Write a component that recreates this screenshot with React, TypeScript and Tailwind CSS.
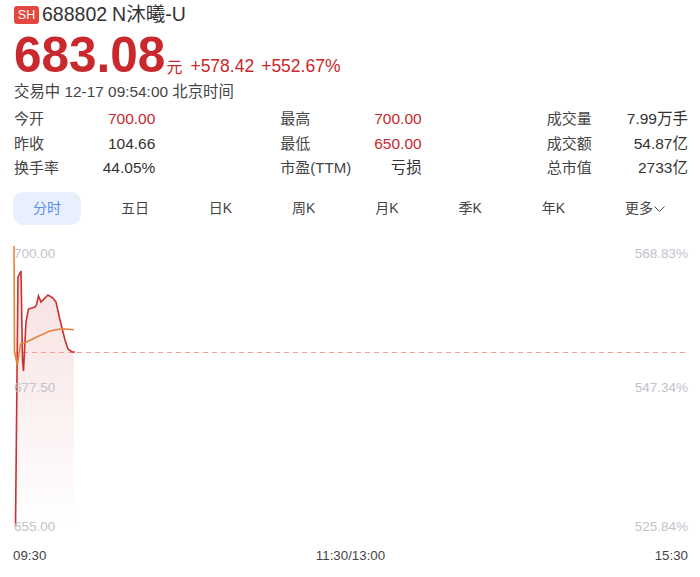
const font = "font-['Liberation_Sans','Noto_Sans_CJK_SC',sans-serif]";

const stats = [
  [
    { label: "今开", value: "700.00", red: true },
    { label: "最高", value: "700.00", red: true },
    { label: "成交量", value: "7.99万手" },
  ],
  [
    { label: "昨收", value: "104.66" },
    { label: "最低", value: "650.00", red: true },
    { label: "成交额", value: "54.87亿" },
  ],
  [
    { label: "换手率", value: "44.05%" },
    { label: "市盈(TTM)", value: "亏损" },
    { label: "总市值", value: "2733亿" },
  ],
];

const tabs = ["五日", "日K", "周K", "月K", "季K", "年K"];

function IntradayChart() {
  return (
    <svg viewBox="0 0 700 300" className="w-[700px] h-[300px] block">
      <defs>
        <linearGradient id="fill" x1="0" y1="0" x2="0" y2="1">
          <stop offset="0" stopColor="#f7e0e0" />
          <stop offset="1" stopColor="#ffffff" />
        </linearGradient>
      </defs>
      {/* area under the price line */}
      <path
        d="M15.5 282 L18 32 L21 26 L22.5 115 L23.5 126 L26 77 L28.5 64 L35 62 L36.5 60 L38.5 51 L41 57 L48 50 L53 53 L56 57 L60 75 L65 95 L68 104 L72 107 L74 107 L74 282 Z"
        fill="url(#fill)"
      />
      <line x1="14" y1="107.5" x2="688" y2="107.5" stroke="#f39a9a" strokeWidth="1" strokeDasharray="5 4" />
      {/* price */}
      <path
        d="M15.5 282 L18 32 L21 26 L22.5 115 L23.5 126 L26 77 L28.5 64 L35 62 L36.5 60 L38.5 51 L41 57 L48 50 L53 53 L56 57 L60 75 L65 95 L68 104 L72 107 L75 107"
        fill="none"
        stroke="#cb2f30"
        strokeWidth="1.6"
      />
      {/* average price */}
      <path
        d="M14 1 L14.5 107 L17.3 120 L20.6 99 L26.7 97 L36.7 92 L50 86 L61.7 83.7 L74 84.7"
        fill="none"
        stroke="#e8833a"
        strokeWidth="1.6"
      />
    </svg>
  );
}

export default function App() {
  return (
    <div className={`${font} w-[700px] h-[577px] bg-white text-[#333] overflow-hidden`}>
      {/* Header */}
      <div className="pl-[14px] pr-3 pt-[5px]">
        <div className="flex items-center h-5">
          <span className="w-[25px] h-[18px] rounded-[3px] bg-[#e2483f] text-white text-[12.5px] flex items-center justify-center">
            SH
          </span>
          <span className="ml-[3px] text-[19.5px] text-[#333]">688802</span>
          <span className="ml-[5px] text-[19.5px] text-[#333]">N沐曦-U</span>
        </div>
        <div className="flex items-end mt-[3px] h-[53px] text-[#c9282d]">
          <span className="text-[49.5px] font-bold leading-[53px]">683.08</span>
          <span className="text-[16px] leading-none ml-[1px] mb-[5px]">元</span>
          <span className="text-[17.5px] leading-none ml-[8px] mb-[6px]">+578.42</span>
          <span className="text-[17.5px] leading-none ml-[7px] mb-[6px]">+552.67%</span>
        </div>
        <div className="text-[15.4px] leading-5 mt-[1px] text-[#444]">交易中 12-17 09:54:00 北京时间</div>
      </div>

      {/* Stats */}
      <div className="pl-[14px] pr-3 mt-[7px] flex flex-col gap-y-[4.5px]">
        {stats.map((row) => (
          <div key={row[0].label} className="grid grid-cols-3 gap-x-[125px] text-[15px] leading-5">
            {row.map((s) => (
              <div key={s.label} className="flex justify-between">
                <span className="text-[#444]">{s.label}</span>
                <span className={`text-[15.5px] ${s.red ? "text-[#c9282d]" : "text-[#333]"}`}>{s.value}</span>
              </div>
            ))}
          </div>
        ))}
      </div>

      {/* Tabs */}
      <div className="pl-[13px] pr-3 mt-[14px] flex items-center justify-between text-[14px] text-[#444]">
        <div className="w-[68px] h-[33px] rounded-[10px] bg-[#e8f0fe] text-[#5b8def] flex items-center justify-center">
          分时
        </div>
        {tabs.map((t) => (
          <div key={t} className="px-5">
            {t}
          </div>
        ))}
        <div className="flex items-center pl-5 pr-[22px]">
          更多
          <svg width="13" height="12" viewBox="0 0 13 12" fill="none" stroke="#444" strokeWidth="1">
            <path d="M1.5 3.5 L6.5 8.5 L11.5 3.5" />
          </svg>
        </div>
      </div>

      {/* Chart */}
      <div className="relative mt-[20px]">
        <IntradayChart />
        <div className="absolute inset-0 pl-[14px] pr-3 pt-[0px] text-[13.5px] leading-4 text-[#c2c2ca] flex flex-col">
          <div className="flex justify-between mt-[1px]">
            <span>700.00</span>
            <span>568.83%</span>
          </div>
          <div className="flex justify-between mt-[118px]">
            <span>677.50</span>
            <span>547.34%</span>
          </div>
          <div className="flex justify-between mt-[123px]">
            <span>655.00</span>
            <span>525.84%</span>
          </div>
        </div>
      </div>
      <div className="pl-[13px] pr-3 mt-[3px] grid grid-cols-3 text-[13.3px] leading-4 text-[#444]">
        <span>09:30</span>
        <span className="text-center">11:30/13:00</span>
        <span className="text-right">15:30</span>
      </div>
    </div>
  );
}
